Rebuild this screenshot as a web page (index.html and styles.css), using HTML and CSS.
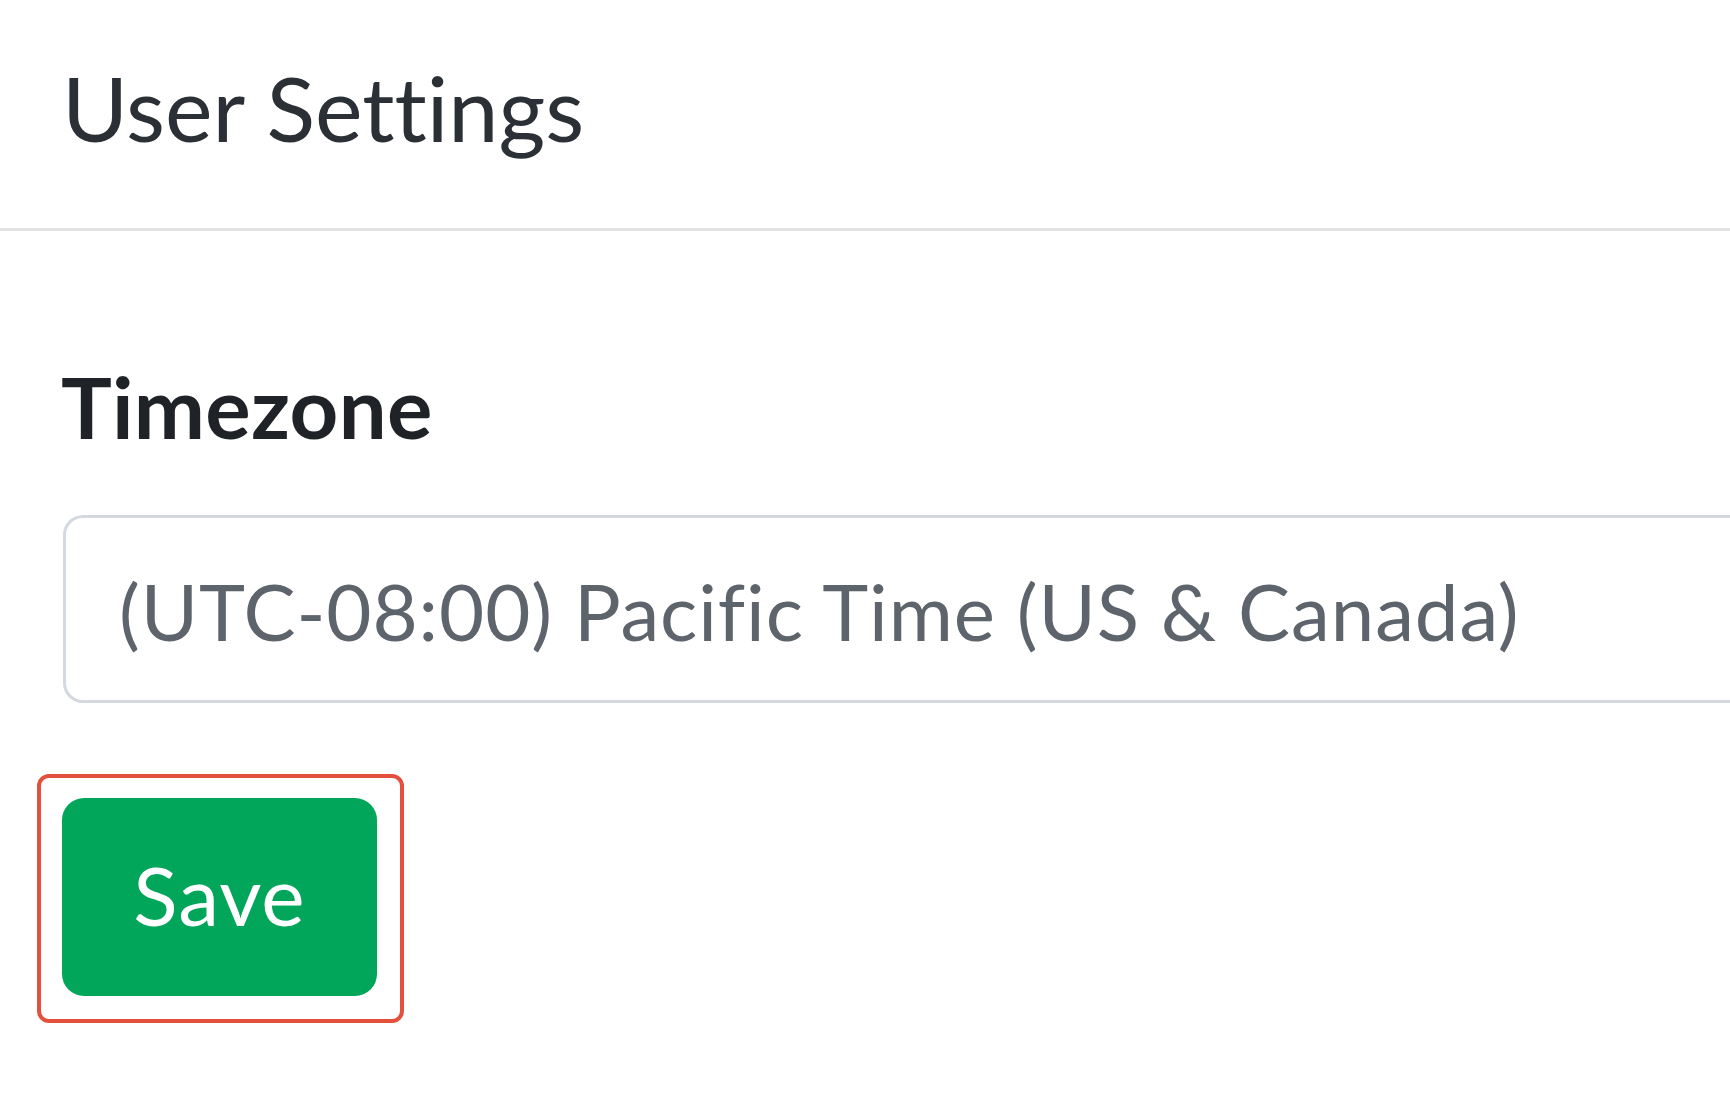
FILE: index.html
```
<!DOCTYPE html>
<html lang="en">
<head>
<meta charset="utf-8">
<title>User Settings</title>
<link rel="stylesheet" href="styles.css">
</head>
<body>
<header class="page-header">
  <h1 class="page-title">User Settings</h1>
</header>
<main class="page-body">
  <form class="settings-form">
    <label class="field-label">Timezone</label>
    <div class="select-box">(UTC-08:00) Pacific Time (US &amp; Canada)</div>
    <div class="highlight">
      <button type="button" class="btn-save">Save</button>
    </div>
  </form>
</main>
</body>
</html>
```
FILE: styles.css
```
html, body {
  margin: 0;
  padding: 0;
  overflow: hidden;
  background: #ffffff;
}
body {
  font-family: "Lato", "Liberation Sans", sans-serif;
  font-variant-ligatures: none;
  width: 1730px;
  height: 1100px;
}
.page-header {
  padding: 53px 0 67px 62px;
  border-bottom: 3px solid #e3e3e3;
}
.page-title {
  margin: 0;
  font-size: 90px;
  font-weight: 400;
  line-height: 1.2;
  color: #2a3036;
}
.page-body {
  padding: 124px 0 0 61px;
}
.settings-form {
  display: flex;
  flex-direction: column;
  align-items: flex-start;
}
.field-label {
  display: block;
  font-size: 85px;
  font-weight: 700;
  line-height: 1.2;
  letter-spacing: 0.3px;
  color: #1f2327;
}
.select-box {
  margin-top: 58px;
  margin-left: 2px;
  width: 1667px;
  height: 188px;
  box-sizing: border-box;
  border: 3px solid #d3d9df;
  border-right: 0;
  border-radius: 20px 0 0 20px;
  padding: 6px 0 0 53px;
  display: flex;
  align-items: center;
  font-size: 78px;
  letter-spacing: 0.9px;
  line-height: 1.2;
  color: #5d646b;
  white-space: nowrap;
}
.highlight {
  margin-top: 71px;
  margin-left: -24px;
  border: 4px solid #e4503b;
  border-radius: 12px;
  padding: 20px 23px 23px 21px;
}
.btn-save {
  display: flex;
  align-items: center;
  justify-content: center;
  width: 315px;
  height: 198px;
  border: 0;
  border-radius: 22px;
  background: #02a65a;
  color: #ffffff;
  font-family: "Lato", "Liberation Sans", sans-serif;
  font-size: 82px;
  font-weight: 400;
  letter-spacing: 1px;
  padding: 0 0 6px 0;
}
```
